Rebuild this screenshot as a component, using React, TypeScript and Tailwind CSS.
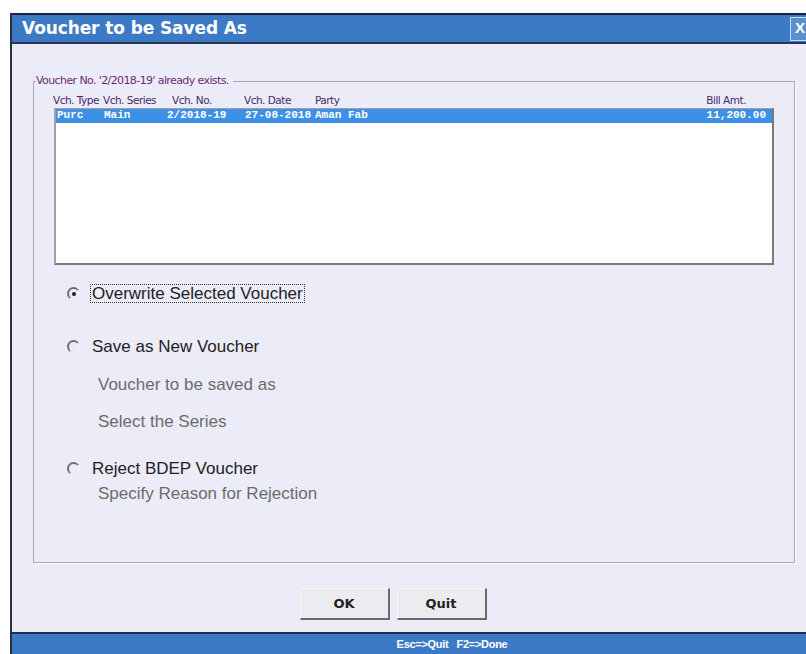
import React from "react";

const tahoma = { fontFamily: '"DejaVu Sans", Tahoma, sans-serif' };

function Radio({ checked }: { checked?: boolean }) {
  return (
    <span className="inline-flex h-[13px] w-[13px] shrink-0 items-center justify-center rounded-full border-l-2 border-t-2 border-[#6e6e6e] border-r border-b border-r-[#f4f4f4] border-b-[#f4f4f4] bg-[#ecebf8]">
      {checked && <span className="h-[4px] w-[4px] rounded-full bg-[#222]" />}
    </span>
  );
}

export default function App() {
  return (
    <div
      className="flex h-[654px] w-[806px] flex-col bg-white pt-[13px]"
      style={{ fontFamily: '"Liberation Sans", Arial, sans-serif' }}
    >
      <div className="ml-[10px] flex flex-1 flex-col border-l-2 border-[#2a2f45] bg-[#ecebf8]">
        {/* title bar */}
        <div className="flex h-[31px] items-center justify-between border-y-2 border-t-[#1d2440] border-b-[#2b3552] bg-[#3d7ac6] pl-[10px]">
          <span className="text-[17px] font-bold tracking-[-0.1px] text-white" style={tahoma}>
            Voucher to be Saved As
          </span>
          <span className="mr-[-4px] flex h-[24px] w-[20px] items-center justify-center border border-[#c9dcf2] bg-[#5a8fd0] text-[15px] font-bold text-white">
            X
          </span>
        </div>

        {/* body */}
        <div className="flex flex-1 flex-col px-[21px] pt-[29px]">
          <fieldset className="h-[490px] border border-[#a8a8b4] shadow-[1px_1px_0_#ffffff] px-[20px]">
            <legend className="ml-[-18px] pr-[4px] text-[11px] tracking-[-0.6px] text-[#6a2c72]" style={tahoma}>
              Voucher No. '2/2018-19' already exists.
            </legend>

            <div className="ml-[-1px] mt-[4px] flex h-[14px] items-center whitespace-nowrap text-[10.5px] tracking-[-0.5px] text-[#4a2a6a]" style={tahoma}>
              <span className="w-[50px]">Vch. Type</span>
              <span className="w-[69px]">Vch. Series</span>
              <span className="w-[72px]">Vch. No.</span>
              <span className="w-[71px]">Vch. Date</span>
              <span className="w-[160px]">Party</span>
              <span className="flex-1 pr-[28px] text-right">Bill Amt.</span>
            </div>

            <div className="h-[157px] w-[720px] border-r-2 border-b-2 border-[#7a7a7a] border-l-2 border-l-[#a0a0a0] border-t border-t-[#a0a0a0] bg-white">
              <div
                className="flex h-[14px] items-center whitespace-nowrap bg-[#3e8fe6] text-[11px] font-bold text-white"
                style={{ fontFamily: '"Liberation Mono", "Courier New", monospace' }}
              >
                <span className="w-[48px] pl-[1px]">Purc</span>
                <span className="w-[63px]">Main</span>
                <span className="w-[78px]">2/2018-19</span>
                <span className="w-[70px]">27-08-2018</span>
                <span className="w-[120px]">Aman Fab</span>
                <span className="flex-1 pr-[6px] text-right">11,200.00</span>
              </div>
            </div>

            <div className="ml-[13px] mt-[19px] flex flex-col text-[17px] text-[#222]">
              <div className="flex items-center gap-[10px]">
                <Radio checked />
                <span className="border border-dotted border-[#333] px-[1px] leading-[17px]">
                  Overwrite Selected Voucher
                </span>
              </div>
              <div className="mt-[31px] flex items-center gap-[12px]">
                <Radio />
                <span>Save as New Voucher</span>
              </div>
              <div className="ml-[31px] mt-[13px] text-[#6b6b6b]">Voucher to be saved as</div>
              <div className="ml-[31px] mt-[11px] text-[#6b6b6b]">Select the Series</div>
              <div className="mt-[22px] flex items-center gap-[12px]">
                <Radio />
                <span>Reject BDEP Voucher</span>
              </div>
              <div className="ml-[31px] mt-[-1px] text-[#6b6b6b]">Specify Reason for Rejection</div>
            </div>
          </fieldset>

          <div className="mt-[25px] flex justify-center gap-[7px] pr-[32px]">
            <button
              className="h-[32px] w-[90px] border border-b-2 border-r-2 border-[#f8f8f8] border-b-[#6a6a6a] border-r-[#6a6a6a] bg-[#ecebf0] text-[13px] font-bold text-[#222]"
              style={tahoma}
            >
              OK
            </button>
            <button
              className="h-[32px] w-[90px] border border-b-2 border-r-2 border-[#f8f8f8] border-b-[#6a6a6a] border-r-[#6a6a6a] bg-[#ecebf0] text-[13px] font-bold text-[#222]"
              style={tahoma}
            >
              Quit
            </button>
          </div>
        </div>

        {/* status bar */}
        <div className="mt-[9px] flex h-[22px] items-center justify-center border-t-2 border-[#22304f] bg-[#3d7ac6] pl-[86px]">
          <span className="text-[11px] font-bold tracking-[-0.3px] text-white">
            Esc=&gt;Quit&nbsp;&nbsp;&nbsp;F2=&gt;Done
          </span>
        </div>
      </div>
    </div>
  );
}
